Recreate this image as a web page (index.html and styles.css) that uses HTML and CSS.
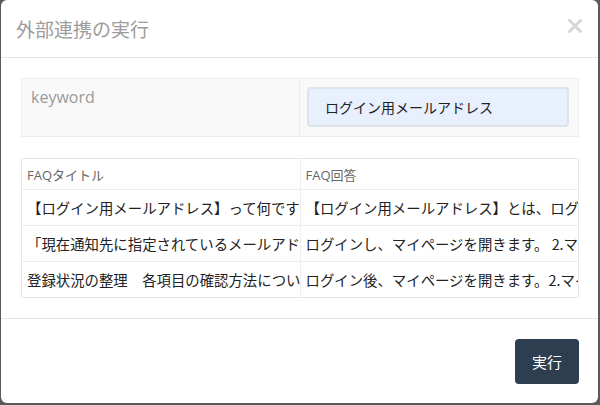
FILE: index.html
```html
<!DOCTYPE html>
<html lang="ja">
<head>
<meta charset="utf-8">
<title>外部連携の実行</title>
<link rel="stylesheet" href="styles.css">
</head>
<body>
<div class="modal">
  <div class="modal-header">
    <h4 class="modal-title">外部連携の実行</h4>
    <button class="close" type="button" aria-label="閉じる">
      <svg width="14" height="14" viewBox="0 0 14 14"><path d="M1.5 1.5 L12.5 12.5 M12.5 1.5 L1.5 12.5" stroke="#d6d6d6" stroke-width="3" stroke-linecap="square"/></svg>
    </button>
  </div>
  <div class="modal-body">
    <table class="param-table">
      <tr>
        <th class="param-label">keyword</th>
        <td class="param-value"><div class="param-input">ログイン用メールアドレス</div></td>
      </tr>
    </table>
    <div class="result-wrap">
      <table class="result-table">
        <colgroup><col class="col-title"><col class="col-answer"></colgroup>
        <thead>
          <tr><th>FAQタイトル</th><th>FAQ回答</th></tr>
        </thead>
        <tbody>
          <tr><td>【ログイン用メールアドレス】って何ですか？</td><td>【ログイン用メールアドレス】とは、ログインの際に使用するメールアドレスです。</td></tr>
          <tr><td>「現在通知先に指定されているメールアドレス」とは？</td><td>ログインし、マイページを開きます。 2.マイページの登録情報を確認します。</td></tr>
          <tr><td>登録状況の整理　各項目の確認方法について</td><td>ログイン後、マイページを開きます。2.マイページの各項目を確認します。</td></tr>
        </tbody>
      </table>
    </div>
  </div>
  <div class="modal-footer">
    <button class="btn-run" type="button">実行</button>
  </div>
</div>
</body>
</html>
```

FILE: styles.css
```css
html, body {
  margin: 0;
  padding: 0;
  background: #5a5a5a;
  height: 405px;
  overflow: hidden;
}

body {
  font-family: "Open Sans", "Noto Sans CJK JP", sans-serif;
  color: #333;
}

.modal {
  margin-left: 1px;
  width: 597px;
  height: 403px;
  background: #fff;
  border-radius: 6px;
  display: flex;
  flex-direction: column;
  overflow: hidden;
}

.modal-header {
  height: 58px;
  box-sizing: border-box;
  padding: 0 16px 0 15px;
  display: flex;
  align-items: center;
  justify-content: space-between;
  border-bottom: 1px solid #e5e5e5;
  flex: none;
}

.modal-title {
  margin: 0;
  font-family: "Noto Sans CJK JP", sans-serif;
  font-size: 19px;
  font-weight: 400;
  color: #9c9c9c;
  line-height: 26px;
  padding-top: 1px;
}

.close {
  border: 0;
  background: none;
  padding: 0;
  margin: 0 0 6px 0;
  display: flex;
  cursor: pointer;
}

.modal-body {
  padding: 20px;
  flex: none;
}

.param-table {
  width: 558px;
  border-collapse: collapse;
  table-layout: fixed;
}

.param-table th,
.param-table td {
  border: 1px solid #eeeeee;
  background: #f9f9f9;
  vertical-align: top;
}

.param-label {
  width: 278px;
  height: 57px;
  box-sizing: border-box;
  padding: 7px 9px;
  text-align: left;
  font-weight: 400;
  font-size: 16px;
  line-height: 22px;
  color: #9a9a9a;
}

.param-value {
  padding: 8px 9px 9px 7px;
}

.param-input {
  height: 40px;
  box-sizing: border-box;
  background: #e8f0fe;
  border: 2px solid #dde3ea;
  border-radius: 4px;
  padding: 0 16px;
  display: flex;
  align-items: center;
  font-family: "Noto Sans CJK JP", sans-serif;
  font-size: 14px;
  color: #222;
}

.result-wrap {
  margin-top: 21px;
  width: 558px;
  box-sizing: border-box;
  border: 1px solid #e6e6e6;
  overflow: hidden;
}

.result-table {
  width: 800px;
  border-collapse: collapse;
  table-layout: fixed;
}

.col-title { width: 278px; }
.col-answer { width: 522px; }

.result-table th,
.result-table td {
  white-space: nowrap;
  overflow: hidden;
  text-align: left;
  padding: 0 0 0 5px;
  border-left: 1px solid #eeeeee;
  border-top: 1px solid #eeeeee;
}

.result-table tr > :first-child {
  border-left: 0;
}

.result-table thead th {
  border-top: 0;
  height: 30px;
  font-weight: 400;
  font-size: 13px;
  color: #666;
}

.result-table td {
  height: 35px;
  font-family: "Noto Sans CJK JP", sans-serif;
  font-size: 14.4px;
  color: #222;
}

.modal-footer {
  flex: 1;
  border-top: 1px solid #e5e5e5;
  padding: 20px 19px 0 20px;
  display: flex;
  justify-content: flex-end;
  align-items: flex-start;
}

.btn-run {
  width: 64px;
  height: 45px;
  border: 0;
  border-radius: 4px;
  background: #2c3e50;
  color: #fff;
  font-family: "Noto Sans CJK JP", sans-serif;
  font-size: 15px;
  padding: 0;
  cursor: pointer;
}
```
